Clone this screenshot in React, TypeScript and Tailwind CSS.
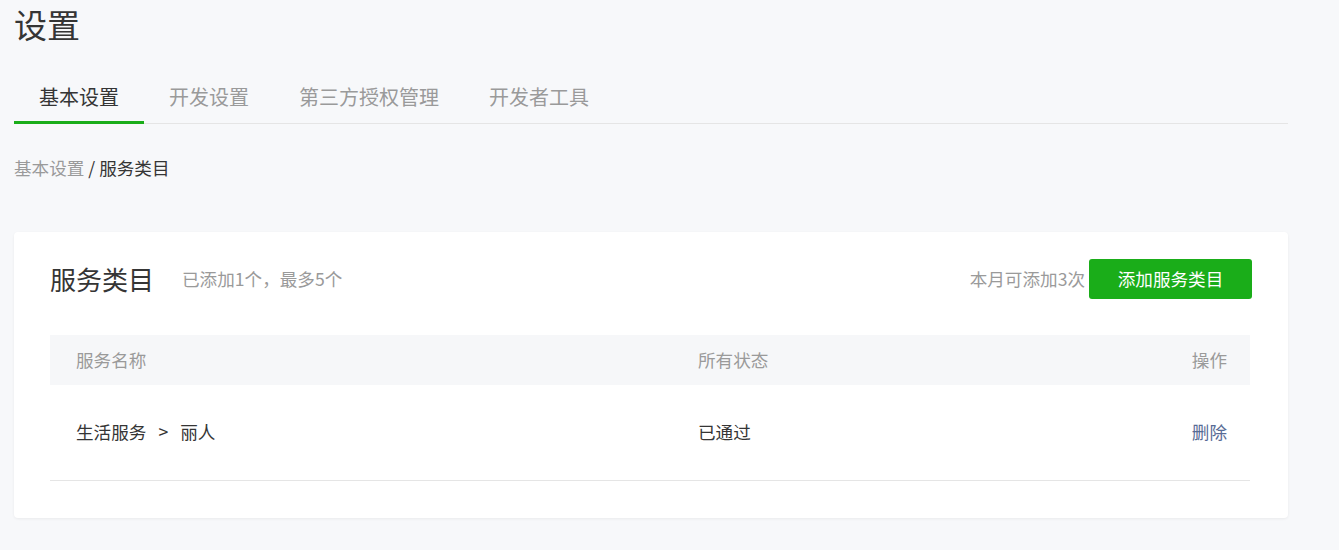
const tabs = ["基本设置", "开发设置", "第三方授权管理", "开发者工具"];

export default function App() {
  return (
    <div className="min-h-[550px] bg-[#f7f8fa] font-['Noto_Sans_CJK_SC','Microsoft_YaHei',sans-serif] text-[#353535]">
      <div className="ml-[14px] w-[1274px]">
        <h1 className="text-[33px] leading-[48px] font-normal">设置</h1>

        {/* Tabs */}
        <div className="flex border-b border-[#e5e5e5]">
          {tabs.map((tab, i) => (
            <div
              key={tab}
              className={
                i === 0
                  ? "-mb-px border-b-[3px] border-[#1aad19] px-[25px] pt-[35px] pb-[10px] text-[20px] leading-[28px] text-[#353535]"
                  : "-mb-px border-b-[3px] border-transparent px-[25px] pt-[35px] pb-[10px] text-[20px] leading-[28px] text-[#9a9a9a]"
              }
            >
              {tab}
            </div>
          ))}
        </div>

        {/* Breadcrumb */}
        <div className="mt-[32px] text-[17.6px] leading-[24px]">
          <span className="text-[#9a9a9a]">基本设置</span>
          <span> / 服务类目</span>
        </div>

        {/* Card */}
        <div className="mt-[52px] rounded-[4px] bg-white px-[36px] pt-[27px] pb-[37px] shadow-[0_1px_3px_rgba(0,0,0,0.06)]">
          <div className="flex h-[40px] items-center justify-between">
            <div className="flex items-center">
              <span className="text-[26px] leading-[36px]">服务类目</span>
              <span className="ml-[28px] text-[17.6px] text-[#9a9a9a]">已添加1个，最多5个</span>
            </div>
            <div className="flex items-center">
              <span className="text-[17.6px] text-[#9a9a9a]">本月可添加3次</span>
              <button className="ml-[4px] h-[40px] w-[163px] rounded-[3px] bg-[#1aad19] text-[17.6px] text-white">
                添加服务类目
              </button>
            </div>
          </div>

          <div className="mt-[36px] mr-[2px] text-[17.6px]">
            <div className="flex h-[50px] items-center bg-[#f6f7f9] pl-[26px] pr-[23px] text-[#9a9a9a]">
              <div className="w-[622px]">服务名称</div>
              <div className="flex-1">所有状态</div>
              <div>操作</div>
            </div>
            <div className="flex h-[96px] items-center border-b border-[#e5e5e5] pl-[26px] pr-[23px]">
              <div className="w-[622px]">
                生活服务<span className="mx-[12px]">&gt;</span>丽人
              </div>
              <div className="flex-1">已通过</div>
              <div className="text-[#576b95]">删除</div>
            </div>
          </div>
        </div>
      </div>
    </div>
  );
}
